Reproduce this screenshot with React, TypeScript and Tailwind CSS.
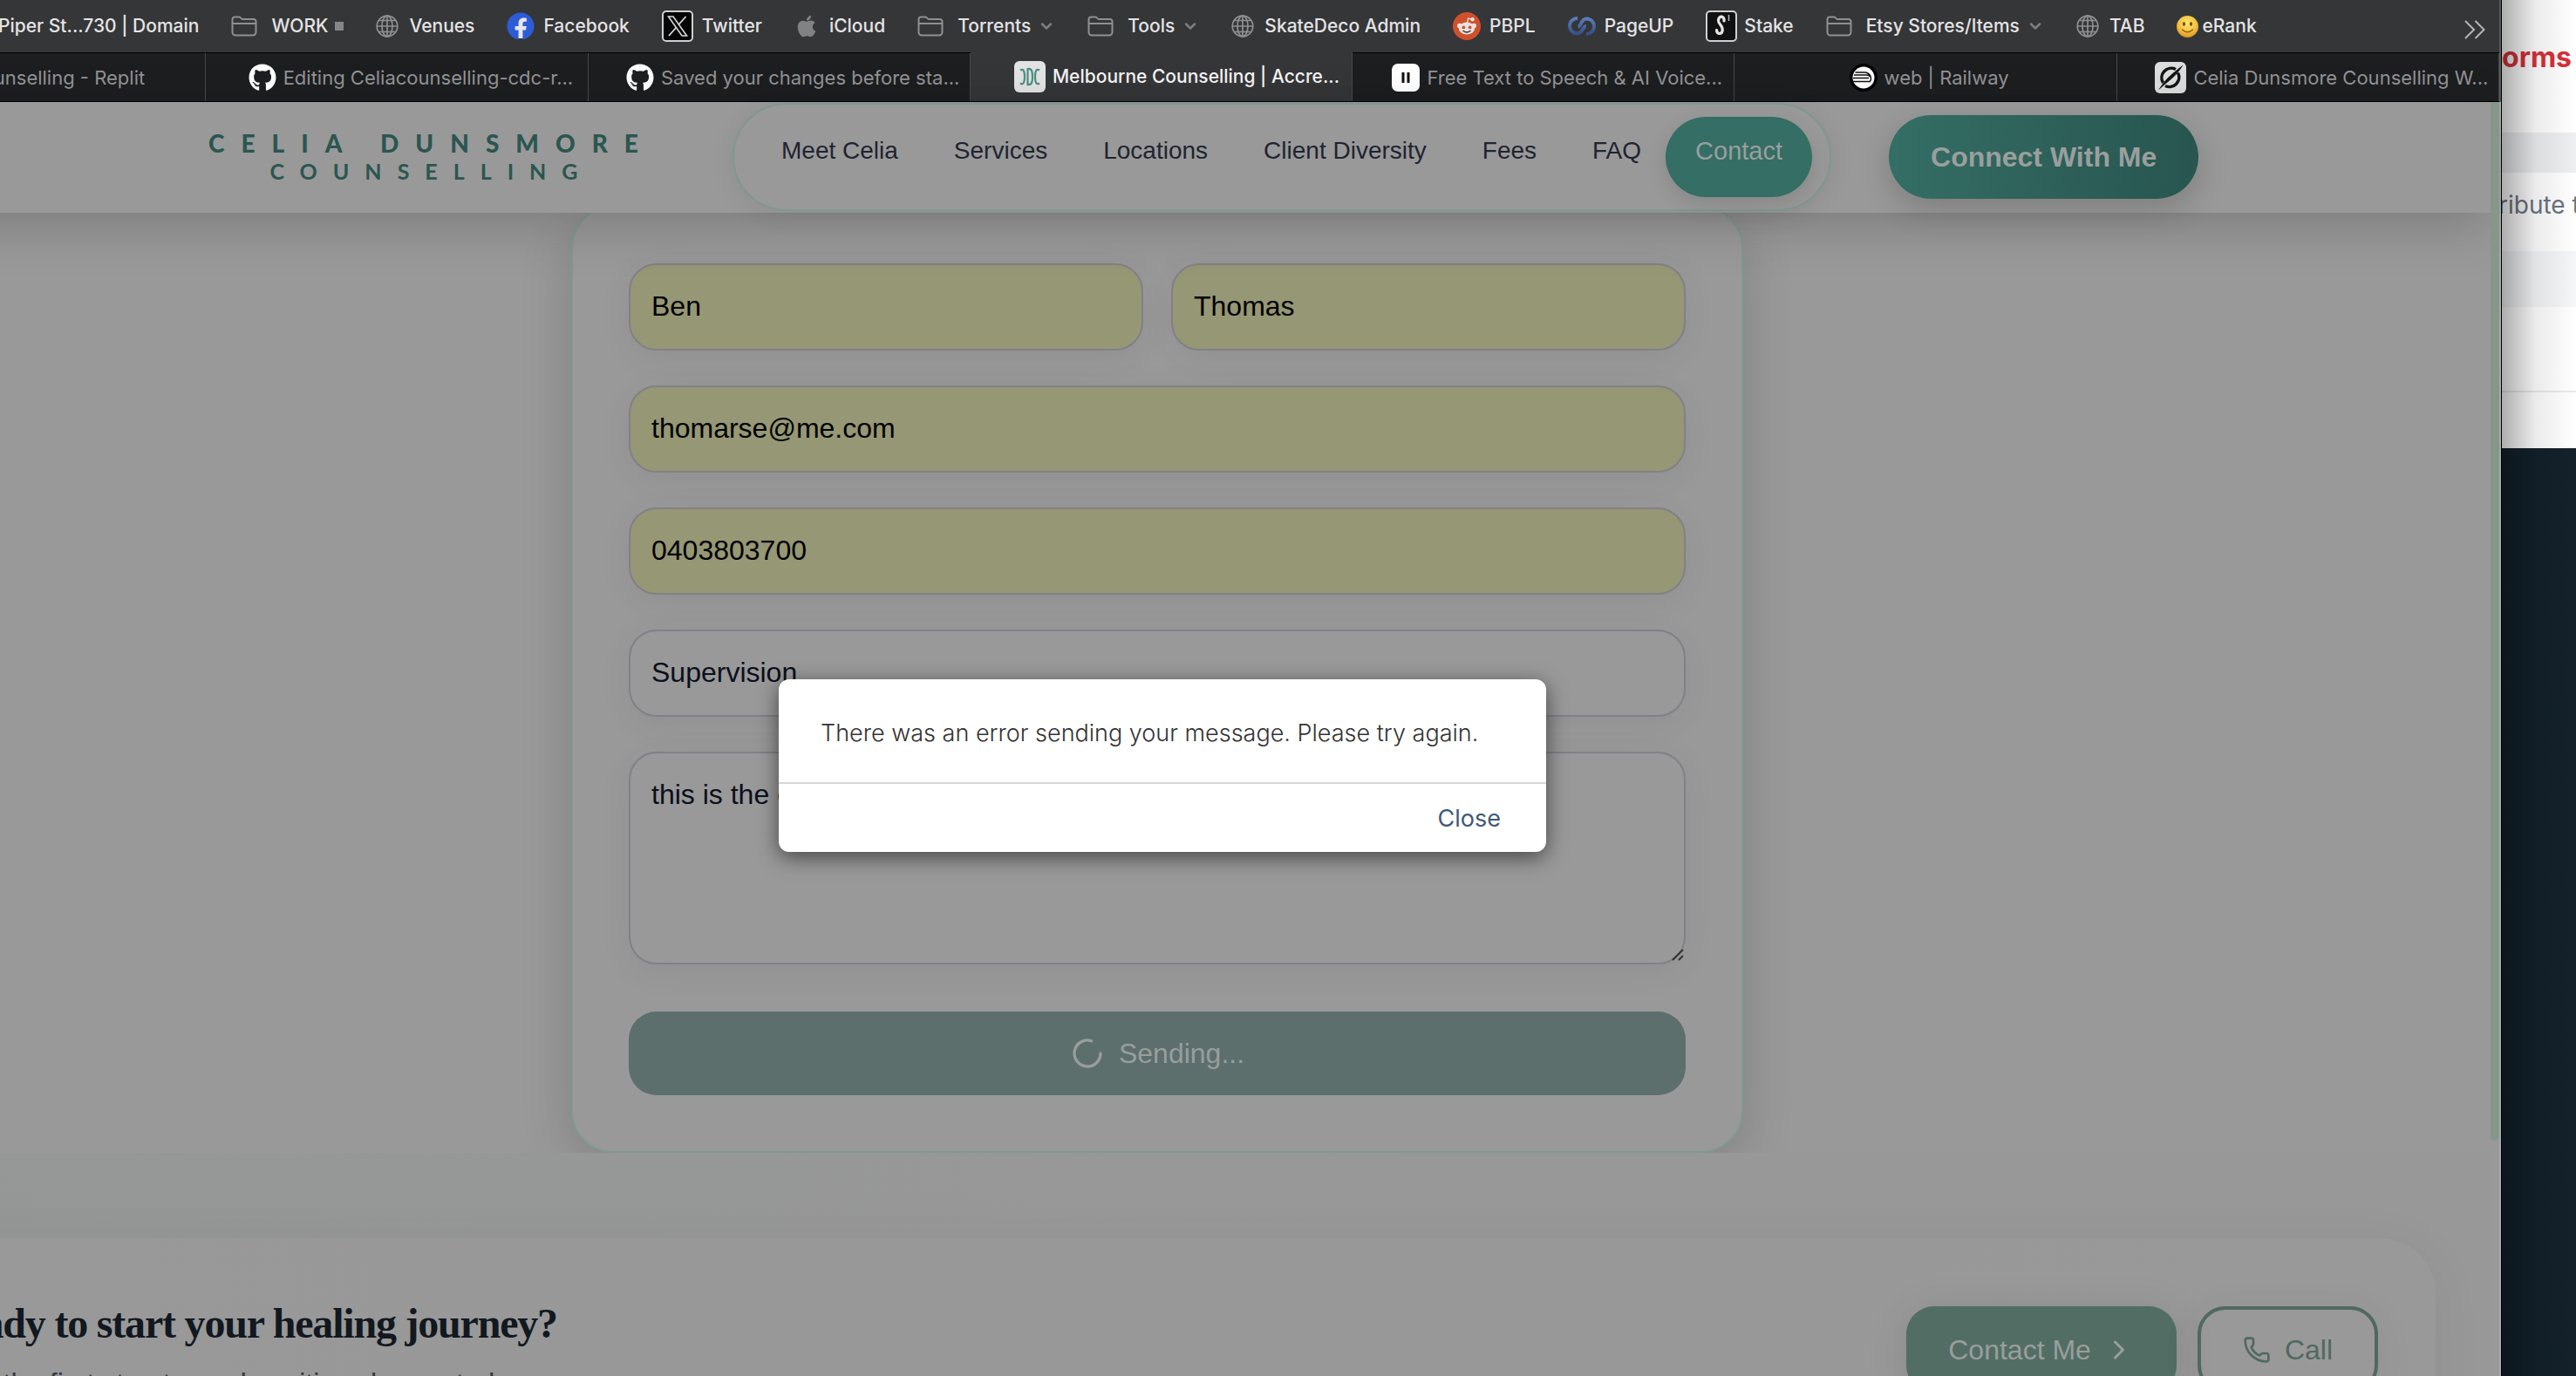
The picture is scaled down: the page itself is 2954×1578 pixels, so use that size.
import React from "react";
import { ChevronDown, ChevronRight, LoaderCircle, Phone } from "lucide-react";
import { FaApple, FaFacebook, FaGithub } from "react-icons/fa";

function FolderIcon() {
  return (
    <svg viewBox="0 0 30 24" className="h-6 w-[30px] shrink-0" fill="none" stroke="#8f9092" strokeWidth="2">
      <path d="M1.5 19V4a2.5 2.5 0 0 1 2.500-2.500h5.500c1.500 0 2 2.500 3.500 2.500h13a2.500 2.500 0 0 1 2.500 2.500V19a3.500 3.500 0 0 1-3.500 3.500H5A3.500 3.500 0 0 1 1.500 19Z" />
      <path d="M1.500 9h27" />
    </svg>
  );
}

function GlobeIcon() {
  return (
    <svg viewBox="0 0 26 26" className="h-[26px] w-[26px] shrink-0" fill="none" stroke="#8f9092" strokeWidth="1.700">
      <circle cx="13" cy="13" r="11.800" />
      <ellipse cx="13" cy="13" rx="6" ry="11.800" />
      <path d="M13 1v24M1 13h24M3.500 6.500h19M3.500 19.500h19" />
    </svg>
  );
}

function XIcon() {
  return (
    <svg viewBox="0 0 36 36" className="h-9 w-9 shrink-0">
      <rect x="1" y="1" width="34" height="34" rx="4" fill="#050505" stroke="#cfd0d0" strokeWidth="2" />
      <path d="M7.500 7h5.500l15.500 22H23Z" fill="none" stroke="#d8d8d8" strokeWidth="1.600" />
      <path d="M27.500 7 19 16.500M16.500 19.500 8 29" stroke="#d8d8d8" strokeWidth="1.800" />
    </svg>
  );
}

function RedditIcon() {
  return (
    <svg viewBox="0 0 32 32" className="h-8 w-8 shrink-0">
      <circle cx="16" cy="16" r="16" fill="#d1502c" />
      <path d="M16.500 13 17.500 7l4.500 1.200" fill="none" stroke="#e6e3e1" strokeWidth="1.300" />
      <circle cx="22.600" cy="8.200" r="2.200" fill="#e6e3e1" />
      <circle cx="7.800" cy="15.500" r="2.800" fill="#e6e3e1" />
      <circle cx="24.200" cy="15.500" r="2.800" fill="#e6e3e1" />
      <ellipse cx="16" cy="18.600" rx="9.200" ry="7" fill="#e6e3e1" />
      <circle cx="12.400" cy="17.400" r="1.900" fill="#d1502c" />
      <circle cx="19.600" cy="17.400" r="1.900" fill="#d1502c" />
      <path d="M12 21.500q4 2.800 8 0" fill="none" stroke="#3a2a26" strokeWidth="1.500" strokeLinecap="round" />
    </svg>
  );
}

function PageUpIcon() {
  return (
    <svg viewBox="0 0 32 24" className="h-6 w-8 shrink-0" fill="none" strokeWidth="4">
      <defs>
        <linearGradient id="pageup" x1="0" y1="0" x2="0" y2="24" gradientUnits="userSpaceOnUse">
          <stop offset="0" stopColor="#5f86c4" />
          <stop offset="1" stopColor="#31487c" />
        </linearGradient>
      </defs>
      <path d="M11 3A8.500 8.500 0 0 0 10.500 20.500C17 20.500 17 12 21 12" stroke="url(#pageup)" />
      <path d="M11.500 13C15.500 12.500 14.500 3.500 21.500 3.500A8.500 8.500 0 0 1 21 21" stroke="url(#pageup)" />
    </svg>
  );
}

function StakeIcon() {
  return (
    <svg viewBox="0 0 36 36" className="h-9 w-9 shrink-0">
      <rect x="1" y="1" width="34" height="34" rx="4" fill="#111" stroke="#cfd0d0" strokeWidth="2" />
      <path d="M21 12c1-6-6-6.500-6.500-1-.4 5 5.500 6 4.700 12-.6 4.500-6.200 5-6.700-.5" fill="none" stroke="#e6e6e6" strokeWidth="3.200" strokeLinecap="round" />
      <path d="M26.500 5v7" stroke="#bbb" strokeWidth="1.500" />
    </svg>
  );
}

function SmileIcon() {
  return (
    <svg viewBox="0 0 25 25" className="h-[25px] w-[25px] shrink-0">
      <defs>
        <radialGradient id="smile" cx="0.500" cy="0.350" r="0.650">
          <stop offset="0" stopColor="#fbe46a" />
          <stop offset="0.600" stopColor="#f5c443" />
          <stop offset="1" stopColor="#dc9325" />
        </radialGradient>
      </defs>
      <circle cx="12.500" cy="12.500" r="12.500" fill="url(#smile)" />
      <ellipse cx="8.500" cy="9.500" rx="1.500" ry="2.200" fill="#6b4410" />
      <ellipse cx="16.500" cy="9.500" rx="1.500" ry="2.200" fill="#6b4410" />
      <path d="M6.500 16q6 5.500 12 0" fill="none" stroke="#8a5a16" strokeWidth="1.300" strokeLinecap="round" />
    </svg>
  );
}

type Bookmark = { label: string; icon?: React.ReactNode; gap: string; menu?: boolean; dot?: boolean };

const bookmarks: Bookmark[] = [
  { label: "Piper St...730 | Domain", gap: "gap-4" },
  { label: "WORK", icon: <FolderIcon />, gap: "gap-4", dot: true },
  { label: "Venues", icon: <GlobeIcon />, gap: "gap-3" },
  {
    label: "Facebook",
    icon: (
      <span className="rounded-full bg-[radial-gradient(circle,#e6e6e6_60%,transparent_62%)]">
        <FaFacebook className="h-8 w-8 text-[#2d5cd8]" />
      </span>
    ),
    gap: "gap-2.5",
  },
  { label: "Twitter", icon: <XIcon />, gap: "gap-2.5" },
  { label: "iCloud", icon: <FaApple className="h-7 w-7 text-[#818284]" />, gap: "gap-3" },
  { label: "Torrents", icon: <FolderIcon />, gap: "gap-4", menu: true },
  { label: "Tools", icon: <FolderIcon />, gap: "gap-4", menu: true },
  { label: "SkateDeco Admin", icon: <GlobeIcon />, gap: "gap-3" },
  { label: "PBPL", icon: <RedditIcon />, gap: "gap-2.5" },
  { label: "PageUP", icon: <PageUpIcon />, gap: "gap-2.5" },
  { label: "Stake", icon: <StakeIcon />, gap: "gap-2" },
  { label: "Etsy Stores/Items", icon: <FolderIcon />, gap: "gap-4", menu: true },
  { label: "TAB", icon: <GlobeIcon />, gap: "gap-3" },
  { label: "eRank", icon: <SmileIcon />, gap: "gap-1" },
];

function BookmarksBar() {
  return (
    <nav aria-label="Bookmarks" className="flex h-[60px] items-center gap-[37px] bg-[#353638] pl-[200px] pr-4 text-[21px] font-medium leading-7 text-[#e4e4e5]">
      {bookmarks.map((b) => (
        <a key={b.label} href="#" className={`flex shrink-0 items-center whitespace-nowrap ${b.gap}`}>
          {b.icon}
          <span className="flex items-center gap-2">
            {b.label}
            {b.menu && <ChevronDown className="h-5 w-5 text-[#7d7e80]" strokeWidth={3} />}
            {b.dot && <span className="h-2.5 w-2.5 bg-[#85868a]" />}
          </span>
        </a>
      ))}
      <button aria-label="More bookmarks" className="ml-auto pt-2">
        <svg viewBox="0 0 24 22" className="h-[22px] w-6" fill="none" stroke="#b4b5b6" strokeWidth="2">
          <path d="M1 1l10 10L1 21M12.500 1l10 10-10 10" />
        </svg>
      </button>
    </nav>
  );
}

function GithubMark() {
  return <FaGithub className="h-8 w-8 shrink-0 text-white" />;
}

type Tab = { label: string; icon: React.ReactNode; active?: boolean; pad: string };

const tabs: Tab[] = [
  { label: "Celiacounselling - Replit", icon: null, pad: "pl-12" },
  { label: "Editing Celiacounselling-cdc-r...", icon: <GithubMark />, pad: "pl-8" },
  { label: "Saved your changes before sta...", icon: <GithubMark />, pad: "pl-8" },
  {
    label: "Melbourne Counselling | Accre...",
    active: true,
    pad: "pl-9",
    icon: (
      <svg viewBox="0 0 36 36" className="h-9 w-9 shrink-0">
        <rect width="36" height="36" rx="6" fill="#e2e3e2" />
        <g fill="none" stroke="#4c8d83" strokeWidth="2.200">
          <path d="M7 10.500c4-2.500 5 2 5 7.500s-1 10-5 7.500M15.500 9v18c5 1 5.500-4 5.500-9s-.5-10-5.500-9ZM29 10.500c-4-2.500-5 2-5 7.500s1 10 5 7.500" />
        </g>
      </svg>
    ),
  },
  {
    label: "Free Text to Speech & AI Voice...",
    pad: "pl-8",
    icon: (
      <svg viewBox="0 0 32 32" className="h-8 w-8 shrink-0">
        <rect width="32" height="32" rx="7" fill="#fff" />
        <path d="M13 10v12M19 10v12" stroke="#111" strokeWidth="3" />
      </svg>
    ),
  },
  {
    label: "web | Railway",
    pad: "pl-2",
    icon: (
      <svg viewBox="0 0 32 32" className="h-8 w-8 shrink-0">
        <circle cx="16" cy="16" r="16" fill="#000" />
        <circle cx="16" cy="16" r="12.500" fill="#fff" />
        <path d="M5 13h15q3 0 4.500 3M4 16.500h18M4 20.500h20M6.500 10h12q6 2 6 7 0 4-3 3.500" fill="none" stroke="#111" strokeWidth="1.500" />
      </svg>
    ),
  },
  {
    label: "Celia Dunsmore Counselling W...",
    pad: "pl-8",
    icon: (
      <svg viewBox="0 0 36 36" className="h-9 w-9 shrink-0">
        <rect width="36" height="36" rx="6" fill="#dcdddd" />
        <path d="M24 8.500A11 11 0 0 0 9.500 24M26.500 12.500A11 11 0 0 1 12 27.500" fill="none" stroke="#141414" strokeWidth="3.500" />
        <path d="M4 32.500Q11 21 20 13.500T32.500 3.500Q27 13 18 20.500T4 32.500Z" fill="#141414" />
      </svg>
    ),
  },
];

function TabBar() {
  return (
    <div role="tablist" className="grid h-[57px] grid-cols-7 border-y border-black bg-[#1d1e20] leading-7">
      {tabs.map((t) => (
        <button
          key={t.label}
          role="tab"
          aria-selected={!!t.active}
          className={`flex items-center justify-center gap-2 border-r border-[#47484a] whitespace-nowrap ${t.pad} ${
            t.active ? "-mt-px bg-[#353638] text-[21px] font-medium text-[#f4f4f4]" : "text-[22px] text-[#929395]"
          }`}
        >
          {t.icon}
          <span>{t.label}</span>
        </button>
      ))}
    </div>
  );
}

const links = ["Meet Celia", "Services", "Locations", "Client Diversity", "Fees", "FAQ"];

function SiteHeader() {
  return (
    <header className="relative z-10 flex h-[127px] items-center bg-[#999] pb-0.5 pl-[442px] shadow-[0_16px_60px_rgba(0,0,0,0.180)]">
      <a href="#" className="flex w-[510px] flex-col items-center font-[Lato,sans-serif] text-[#2b5650]">
        <span className="text-[28px] leading-8 font-black tracking-[19px] whitespace-nowrap">CELIA DUNSMORE</span>
        <span className="text-[25px] leading-8 font-bold tracking-[18px] whitespace-nowrap">COUNSELLING</span>
      </a>
      <nav
        aria-label="Main"
        className="ml-[90px] flex h-[124px] items-center rounded-full border-2 border-[#7f988f] bg-[#999] pl-[22px] pr-5 text-[28px] leading-10 text-[#1f2430] shadow-[0_4px_30px_rgba(0,0,0,0.080)]"
      >
        {links.map((l) => (
          <a key={l} href="#" className="px-8 pb-3.5 whitespace-nowrap">
            {l}
          </a>
        ))}
        <a href="#" className="-ml-1 h-[92px] rounded-full bg-[#346e64] px-[34px] pt-[19px] text-[29px] text-[#999f9d] shadow-[0_8px_24px_rgba(0,0,0,0.120)]">
          Contact
        </a>
      </nav>
      <button className="ml-[66px] h-24 rounded-full bg-linear-to-r from-[#346e64] to-[#285550] px-12 text-[32px] leading-10 font-bold whitespace-nowrap text-[#999f9e] shadow-[0_12px_36px_rgba(0,0,0,0.180)]">
        Connect With Me
      </button>
    </header>
  );
}

const fieldBox = "w-full rounded-[32px] border-2 border-[#808188] px-6 text-[32px] shadow-[0_8px_40px_rgba(0,0,0,0.060)] outline-none";

function Field({ id, label, type, value }: { id: string; label: string; type: string; value: string }) {
  return (
    <div className="h-[100px]">
      <label htmlFor={id} className="sr-only">
        {label}
      </label>
      <input id={id} type={type} defaultValue={value} className={`${fieldBox} h-[100px] bg-[#969774] pb-0.5 text-black`} />
    </div>
  );
}

function ContactForm() {
  return (
    <section className="flex justify-center overflow-hidden">
      <form
        className="-mt-2 flex w-[1344px] flex-col gap-10 rounded-[48px] border-2 border-[#7f9a90] bg-[#999] p-16 shadow-[0_16px_60px_rgba(0,0,0,0.160)]"
        onSubmit={(e) => e.preventDefault()}
      >
        <div className="grid grid-cols-2 gap-8">
          <Field id="first" label="First name" type="text" value="Ben" />
          <Field id="last" label="Last name" type="text" value="Thomas" />
        </div>
        <Field id="email" label="Email" type="email" value="thomarse@me.com" />
        <Field id="phone" label="Phone" type="tel" value="0403803700" />
        <div className="h-[100px]">
          <label htmlFor="service" className="sr-only">
            Service
          </label>
          <select id="service" className={`${fieldBox} h-[100px] appearance-none bg-[#999] pb-0.5 text-[#0b0f1a]`}>
            <option>Supervision</option>
          </select>
        </div>
        <div className="relative mb-[14px] h-[244px]">
          <label htmlFor="message" className="sr-only">
            Message
          </label>
          <textarea
            id="message"
            defaultValue="this is the e"
            className={`${fieldBox} h-[244px] resize-none bg-[#999] pt-6 leading-[46px] text-[#0b0f1a]`}
          />
          <svg viewBox="0 0 14 14" className="absolute right-0.5 bottom-1 h-3.5 w-3.5" stroke="#333" strokeWidth="2">
            <path d="M1 13 13 1M8 13l5-5" />
          </svg>
        </div>
        <button type="submit" className="flex h-24 items-center justify-center gap-4 rounded-[32px] bg-[#5c6f6c] text-[32px] text-[#999e9d]">
          <LoaderCircle className="h-10 w-10" strokeWidth={2} />
          Sending...
        </button>
      </form>
    </section>
  );
}

function CallToAction() {
  return (
    <section className="bg-linear-to-r from-[#959696] to-[#989898] to-60% px-[63px] pt-[98px]">
      <div className="flex items-start justify-between rounded-t-[64px] bg-linear-to-r from-[#999] via-[#979897] to-[#999] px-[66px] pt-[78px] pb-20 shadow-[0_8px_60px_rgba(0,0,0,0.060)]">
        <div>
          <h2 className="font-['Liberation_Serif',serif] text-[48px] leading-10 font-bold tracking-tight text-[#12181f]">
            Ready to start your healing journey?
          </h2>
          <p className="mt-6 text-[32px] leading-[48px] text-[#33383f]">Take the first step toward positive change today.</p>
        </div>
        <div className="flex gap-6 text-[32px]">
          <a href="#" className="flex h-[100px] items-center gap-3.5 rounded-[32px] bg-[#526e64] px-12 text-[#999e9c] shadow-[0_8px_50px_rgba(0,0,0,0.100)]">
            Contact Me
            <ChevronRight className="h-9 w-9" />
          </a>
          <a href="#" className="flex h-[100px] items-center gap-4 rounded-[32px] border-4 border-[#50695f] px-12 text-[#50695f] shadow-[0_8px_50px_rgba(0,0,0,0.060)]">
            <Phone className="h-8 w-8" />
            Call
          </a>
        </div>
      </div>
    </section>
  );
}

function ErrorDialog() {
  return (
    <div
      role="alertdialog"
      aria-label="Error"
      className="absolute top-[779px] left-1/2 z-20 w-[880px] -translate-x-1/2 rounded-xl bg-white font-[Inter,sans-serif] text-[27px] leading-10 shadow-[0_6px_24px_rgba(0,0,0,0.550)]"
    >
      <p className="border-b-2 border-[#d6d6d6] px-12 pt-[42px] pb-9 font-light whitespace-nowrap text-[#333]">
        There was an error sending your message. Please try again.
      </p>
      <div className="flex justify-end px-[52px] pt-5 pb-[18px]">
        <button className="text-[#3f5a78]">Close</button>
      </div>
    </div>
  );
}

function BackgroundWindow() {
  return (
    <aside className="relative w-[85px] shrink-0 overflow-hidden bg-[#13212b] font-[Inter,sans-serif]">
      <div className="flex flex-col whitespace-nowrap">
        <div className="h-[152px] bg-white pt-[46px] text-[32px] leading-10 font-bold text-[#d8303a]">orms</div>
        <div className="h-[46px] bg-[#edeff1]" />
        <div className="flex h-[90px] items-center bg-white text-[28px] leading-8 text-[#6b7280]">
          <span className="-ml-1 pb-4">ribute t</span>
        </div>
        <div className="h-16 bg-[#f4f6f8]" />
        <div className="h-[98px] border-b-2 border-[#e9eaec] bg-white" />
        <div className="h-16 bg-white" />
      </div>
      <div className="absolute inset-0 bg-linear-to-r from-black/32 via-black/8 via-45% to-transparent" />
    </aside>
  );
}

export default function App() {
  return (
    <div className="flex h-screen overflow-hidden bg-[#999] font-['Liberation_Sans',Arial,sans-serif]">
      <main className="relative -ml-[202px] min-w-0 flex-1 overflow-hidden border-r border-black">
        <div className="border-r-2 border-[#58595b] font-[Inter,sans-serif]">
          <BookmarksBar />
          <TabBar />
        </div>
        <div className="relative border-r-2 border-[#a9a9a9]">
          <div className="pr-2.5">
            <SiteHeader />
            <ContactForm />
            <CallToAction />
          </div>
          <div className="absolute top-0 right-0 z-10 h-[1191px] w-2.5 rounded-b-full bg-[#85978a]" />
        </div>
        <ErrorDialog />
      </main>
      <BackgroundWindow />
    </div>
  );
}
